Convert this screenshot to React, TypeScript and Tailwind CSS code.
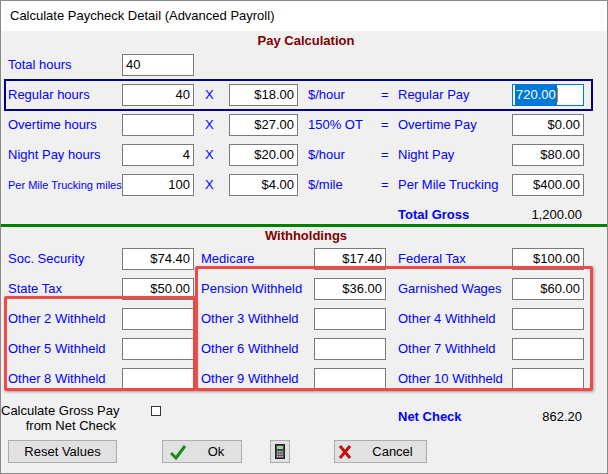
import React from "react";

const F = { fontFamily: '"Liberation Sans", Arial, sans-serif' };

function Box({ v = "", w = "w-[72px]", left = false }: { v?: string; w?: string; left?: boolean }) {
  return (
    <div className={`${w} h-[22px] bg-white border border-[#7a7a7a] flex items-center ${left ? "justify-start pl-[3px]" : "justify-end pr-[3px]"} text-[13px] text-black`}>
      {v}
    </div>
  );
}

const L = ({ t, small = false }: { t: string; small?: boolean }) => (
  <div className={`text-[#0000ff] ${small ? "text-[11px]" : "text-[13px]"} whitespace-nowrap`}>{t}</div>
);

function PayRow({ label, hrs, rate, unit, pay, payLabel, small, sel }: any) {
  return (
    <div className="relative grid grid-cols-[7px_114px_72px_35px_69px_78px_22px_114px_72px] items-center h-[30px]">
      {sel && <div className="absolute left-[3px] top-[-1px] w-[589px] h-[32px] border-2 border-[#000080]" />}
      <div />
      <L t={label} small={small} />
      <Box v={hrs} />
      <div className="text-[#0000ff] text-[13px] pl-[11px]">X</div>
      <Box v={rate} w="w-[69px]" />
      <div className="text-[#0000ff] text-[13px] pl-[10px]">{unit}</div>
      <div className="text-[#0000ff] text-[13px] pl-[5px]">=</div>
      <L t={payLabel} />
      {sel ? (
        <div className="w-[72px] h-[22px] bg-white border border-[#0078d7] flex items-center pl-[2px] text-[13px]">
          <span className="bg-[#0078d7] text-white px-[1px]">720.00</span>
          <span className="w-[1px] h-[14px] bg-[#e07020]" />
        </div>
      ) : (
        <Box v={pay} />
      )}
    </div>
  );
}

function WRow({ a, av, b, bv, c, cv }: any) {
  return (
    <div className="grid grid-cols-[7px_114px_72px_7px_113px_72px_12px_114px_72px] items-center h-[30px]">
      <div />
      <L t={a} />
      <Box v={av} />
      <div />
      <L t={b} />
      <Box v={bv} />
      <div />
      <L t={c} />
      <Box v={cv} />
    </div>
  );
}

function Btn({ children, w }: { children: React.ReactNode; w: string }) {
  return (
    <div className={`${w} h-[23px] bg-[#e1e1e1] border border-[#adadad] flex items-center justify-center text-[13px] text-black`}>
      {children}
    </div>
  );
}

export default function App() {
  return (
    <div style={F} className="w-[608px] h-[474px] bg-[#f0f0f0] border border-[#8a8a8a] flex flex-col relative overflow-hidden">
      <div className="h-[30px] bg-white flex items-center pl-[9px] text-[13px] text-black shrink-0">
        Calculate Paycheck Detail (Advanced Payroll)
      </div>
      <div className="h-[20px] flex items-center justify-center text-[13px] font-bold text-[#800000] pl-[4px]">Pay Calculation</div>
      <div className="grid grid-cols-[7px_114px_72px] items-center h-[30px] -mt-[1px]">
        <div />
        <L t="Total hours" />
        <Box v="40" left />
      </div>
      <PayRow label="Regular hours" hrs="40" rate="$18.00" unit="$/hour" payLabel="Regular Pay" sel />
      <PayRow label="Overtime hours" hrs="" rate="$27.00" unit="150% OT" payLabel="Overtime Pay" pay="$0.00" />
      <PayRow label="Night Pay hours" hrs="4" rate="$20.00" unit="$/hour" payLabel="Night Pay" pay="$80.00" />
      <PayRow label="Per Mile Trucking miles" small hrs="100" rate="$4.00" unit="$/mile" payLabel="Per Mile Trucking" pay="$400.00" />
      <div className="flex items-end h-[22px]">
        <div className="w-[397px]" />
        <div className="w-[114px] text-[13px] font-bold text-[#0000ff] leading-[15px]">Total Gross</div>
        <div className="w-[70px] text-right text-[13px] leading-[15px]">1,200.00</div>
      </div>
      <div className="h-[3px] bg-[#008000] mt-[2px]" />
      <div className="h-[17px] flex items-center justify-center text-[13px] font-bold text-[#800000] pl-[4px]">Withholdings</div>
      <div className="relative">
        <WRow a="Soc. Security" av="$74.40" b="Medicare" bv="$17.40" c="Federal Tax" cv="$100.00" />
        <WRow a="State Tax" av="$50.00" b="Pension Withheld" bv="$36.00" c="Garnished Wages" cv="$60.00" />
        <WRow a="Other 2 Withheld" b="Other 3 Withheld" c="Other 4 Withheld" />
        <WRow a="Other 5 Withheld" b="Other 6 Withheld" c="Other 7 Withheld" />
        <WRow a="Other 8 Withheld" b="Other 9 Withheld" c="Other 10 Withheld" />
        <div className="absolute left-[3px] top-[52px] w-[192px] h-[95px] border-[3px] border-[#ef4a4a] rounded-[2px] shadow-[1px_1px_3px_rgba(0,0,0,0.35)]" />
        <div className="absolute left-[194px] top-[22px] w-[398px] h-[125px] border-[3px] border-[#ef4a4a] rounded-[2px] shadow-[1px_1px_3px_rgba(0,0,0,0.35)]" />
      </div>
      <div className="flex items-start h-[35px] mt-[9px]">
        <div className="w-[115px] text-[13px] text-right leading-[15px] text-black whitespace-nowrap">Calculate Gross Pay<br />from Net Check</div>
        <div className="w-[10px] h-[10px] bg-white border border-[#333] ml-[35px] mt-[3px]" />
        <div className="w-[237px]" />
        <div className="w-[114px] text-[13px] font-bold text-[#0000ff] mt-[4px]">Net Check</div>
        <div className="w-[70px] text-right text-[13px] mt-[4px]">862.20</div>
      </div>
      <div className="flex items-center h-[23px] mt-[2px]">
        <div className="w-[7px]" />
        <Btn w="w-[109px]">Reset Values</Btn>
        <div className="w-[45px]" />
        <Btn w="w-[80px]">
          <svg width="16" height="16" viewBox="0 0 16 16" className="mr-[22px] ml-[-10px]">
            <path d="M1 9 L6 14 L15 2" fill="none" stroke="#1a8a1a" strokeWidth="3" />
          </svg>
          Ok
        </Btn>
        <div className="w-[28px]" />
        <div className="w-[20px] h-[23px] bg-[#e1e1e1] border border-[#adadad] flex items-center justify-center">
          <svg width="10" height="15" viewBox="0 0 10 15">
            <rect x="0.5" y="0.5" width="9" height="14" fill="#444" stroke="#222" />
            <rect x="2" y="2" width="6" height="3" fill="#9fd29f" />
            {[0, 1, 2].map((r) => [0, 1, 2].map((c) => <rect key={r + "-" + c} x={2 + c * 2.2} y={7 + r * 2.4} width="1.4" height="1.4" fill="#ddd" />))}
          </svg>
        </div>
        <div className="w-[44px]" />
        <Btn w="w-[93px]">
          <svg width="14" height="14" viewBox="0 0 14 14" className="mr-[20px] ml-[-10px]">
            <path d="M2 1 L12 13 M12 1 L2 13" stroke="#c01010" strokeWidth="3" />
          </svg>
          Cancel
        </Btn>
      </div>
    </div>
  );
}
